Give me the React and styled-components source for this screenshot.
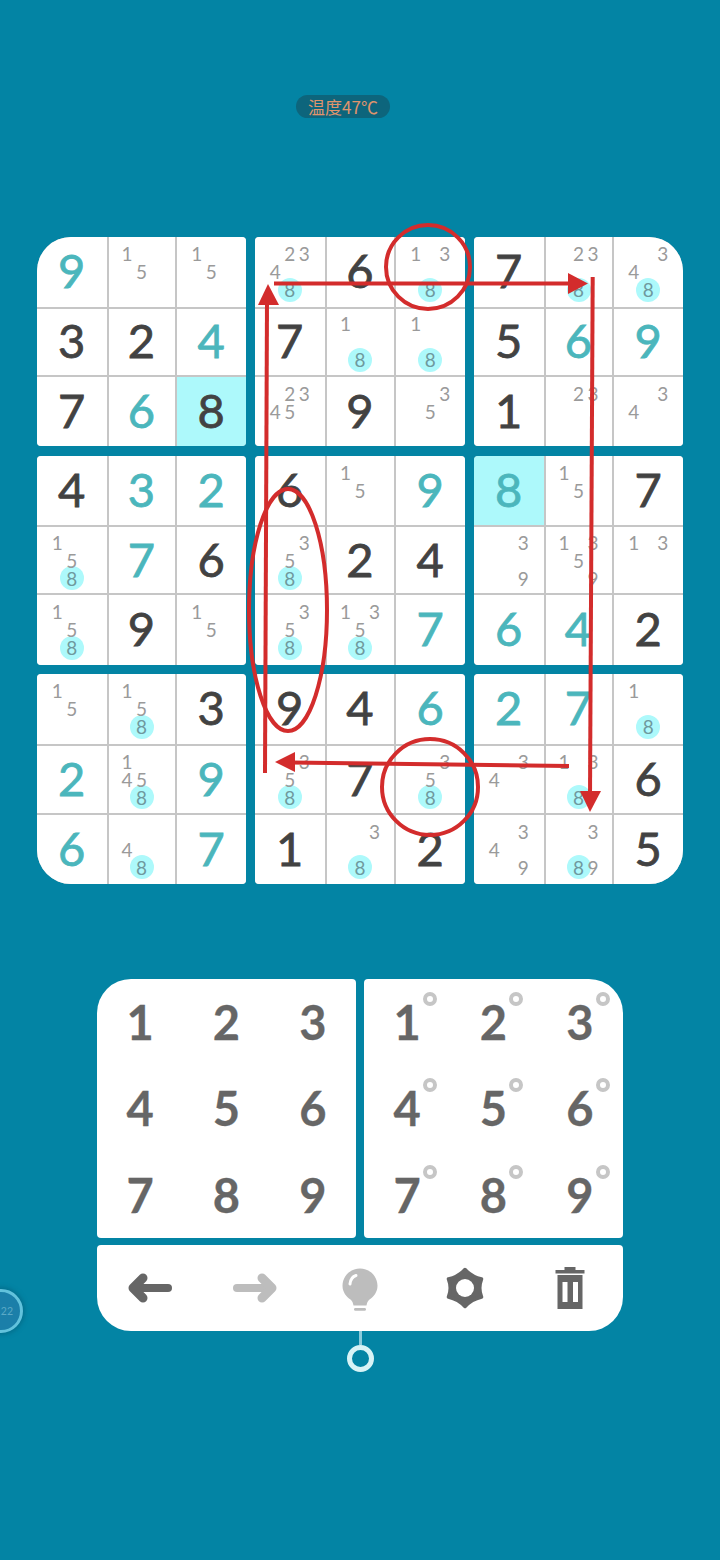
import React from 'react';
import styled, { createGlobalStyle } from 'styled-components';

const GlobalStyle = createGlobalStyle`
  html, body { margin: 0; padding: 0; background: #0384a4; overflow: hidden; }
`;

const Page = styled.div`
  position: relative;
  width: 720px;
  height: 1560px;
  background: #0384a4;
  display: flex;
  flex-direction: column;
  align-items: center;
  padding-top: 95px;
  box-sizing: border-box;
  overflow: hidden;
  font-family: "Lato", "Liberation Sans", sans-serif;
`;

const TempPill = styled.div`
  width: 94px;
  height: 23px;
  margin-right: 34px;
  border-radius: 12px;
  background: #0d657c;
  color: #e0946c;
  font: 400 17px/23px "Noto Sans CJK SC", sans-serif;
  text-align: center;
  white-space: nowrap;
`;

const Board = styled.div`
  margin-top: 119px;
  width: 646px;
  display: grid;
  grid-template-columns: 209px 210px 209px;
  grid-template-rows: 209px 209px 210px;
  column-gap: 9px;
  row-gap: 9.5px;
`;

const Box = styled.div`
  display: grid;
  grid-template-columns: 69.5px 1fr 69.5px;
  grid-template-rows: 69.5px 1fr 69.5px;
  gap: 2px;
  background: #c6c6c6;
  overflow: hidden;
  border-radius: ${(p) => p.$radius};
`;

const Cell = styled.div`
  display: flex;
  align-items: center;
  justify-content: center;
  padding-bottom: ${(p) => (p.$digit ? '2px' : '0')};
  background: ${(p) => (p.$hl ? '#adf9fb' : '#fff')};
  color: ${(p) => (p.$teal ? '#4bb6bc' : '#424242')};
  font-size: 47px;
  font-weight: 400;
  -webkit-text-stroke: ${(p) => (p.$digit ? '0.8px currentColor' : '0')};
  line-height: 1;
  isolation: isolate;
`;

const Notes = styled.div`
  display: grid;
  grid-template-columns: repeat(3, 14.5px);
  grid-template-rows: repeat(3, 18px);
`;

const Note = styled.span`
  position: relative;
  display: flex;
  align-items: center;
  justify-content: center;
  font-size: 19px;
  font-weight: 400;
  color: ${(p) => (p.$hot ? '#6f999e' : '#9a9a9a')};
  &::before {
    content: ${(p) => (p.$hot ? '""' : 'none')};
    position: absolute;
    left: 50%;
    top: 50%;
    width: 24px;
    height: 24px;
    margin: -12px 0 0 -12px;
    border-radius: 50%;
    background: #adf9fb;
    z-index: -1;
  }
`;

const Pads = styled.div`
  margin-top: 95px;
  display: flex;
  gap: 8px;
`;

const Pad = styled.div`
  width: 259px;
  height: 259px;
  background: #fff;
  border-radius: ${(p) => p.$radius};
  display: grid;
  grid-template-columns: repeat(3, 1fr);
  grid-template-rows: repeat(3, 1fr);
`;

const PadKey = styled.div`
  position: relative;
  display: flex;
  align-items: center;
  justify-content: center;
  padding-top: 1px;
  color: #666;
  font-size: 47px;
  font-weight: 700;
  -webkit-text-stroke: 0.3px currentColor;
  line-height: 1;
`;

const KeyRing = styled.i`
  position: absolute;
  left: 50%;
  top: 50%;
  width: 14px;
  height: 14px;
  margin: -30px 0 0 16px;
  box-sizing: border-box;
  border: 4px solid #c6c6c6;
  border-radius: 50%;
`;

const Toolbar = styled.div`
  margin-top: 7px;
  width: 526px;
  height: 86px;
  background: #fff;
  border-radius: 4px 4px 34px 34px;
  display: grid;
  grid-template-columns: repeat(5, 1fr);
  align-items: center;
  justify-items: center;
`;

const BulbSvg = styled.svg`
  margin-top: 4px;
`;

const Stem = styled.div`
  width: 3px;
  height: 14px;
  background: #8ccbdb;
`;

const PinRing = styled.div`
  width: 27px;
  height: 27px;
  box-sizing: border-box;
  border: 5px solid #d8f3f6;
  border-radius: 50%;
`;

const SideBubble = styled.div`
  position: absolute;
  left: -21px;
  top: 1289px;
  width: 44px;
  height: 44px;
  box-sizing: border-box;
  border: 3px solid #62c2dc;
  border-radius: 50%;
  background: #1b7fa9;
  box-shadow: 0 0 4px 2px #04708e;
  color: #5aa9c6;
  font-size: 10.5px;
  line-height: 38px;
  text-align: right;
  padding-right: 7px;
`;

const Overlay = styled.svg`
  position: absolute;
  left: 0;
  top: 0;
  pointer-events: none;
`;

const grid = [
  ['9t', [1, 5], [1, 5], [2, 3, 4, 8], '6', [1, 3, 8], '7', [2, 3, 8], [3, 4, 8]],
  ['3', '2', '4t', '7', [1, 8], [1, 8], '5', '6t', '9t'],
  ['7', '6t', '8h', [2, 3, 4, 5], '9', [3, 5], '1', [2, 3], [3, 4]],
  ['4', '3t', '2t', '6', [1, 5], '9t', '8th', [1, 5], '7'],
  [[1, 5, 8], '7t', '6', [3, 5, 8], '2', '4', [3, 9], [1, 3, 5, 9], [1, 3]],
  [[1, 5, 8], '9', [1, 5], [3, 5, 8], [1, 3, 5, 8], '7t', '6t', '4t', '2'],
  [[1, 5], [1, 5, 8], '3', '9', '4', '6t', '2t', '7t', [1, 8]],
  ['2t', [1, 4, 5, 8], '9t', [3, 5, 8], '7', [3, 5, 8], [3, 4], [1, 3, 8], '6'],
  ['6t', [4, 8], '7t', '1', [3, 8], '2', [3, 4, 9], [3, 8, 9], '5'],
];

const boxRadius = {
  0: '34px 4px 4px 4px',
  2: '4px 34px 4px 4px',
  6: '4px 4px 4px 34px',
  8: '4px 4px 34px 4px',
};

const digits = [1, 2, 3, 4, 5, 6, 7, 8, 9];

function SudokuCell({ value }) {
  if (Array.isArray(value)) {
    return (
      <Cell>
        <Notes>
          {digits.map((d) => (
            <Note key={d} $hot={d === 8 && value.includes(8)}>
              {value.includes(d) ? d : ''}
            </Note>
          ))}
        </Notes>
      </Cell>
    );
  }
  return (
    <Cell $digit $teal={value.includes('t')} $hl={value.includes('h')}>
      {value[0]}
    </Cell>
  );
}

function BackIcon({ color }) {
  return (
    <svg width="46" height="32" viewBox="0 0 46 32" fill="none" stroke={color} strokeWidth="8" strokeLinecap="round" strokeLinejoin="round">
      <path d="M41 16H8" />
      <path d="M16 6L6 16L16 26" strokeWidth="9" />
    </svg>
  );
}

function ForwardIcon({ color }) {
  return (
    <svg width="46" height="32" viewBox="0 0 46 32" fill="none" stroke={color} strokeWidth="8" strokeLinecap="round" strokeLinejoin="round">
      <path d="M5 16H38" />
      <path d="M30 6L40 16L30 26" strokeWidth="9" />
    </svg>
  );
}

function BulbIcon() {
  return (
    <BulbSvg width="36" height="44" viewBox="0 0 36 44">
      <path d="M18 0.5C8.3 0.5 0.5 8.2 0.5 17.8C0.5 24.5 4.6 28.9 8.5 31.5C10.3 33 11 34.8 11.5 37.5H24.5C25 34.8 25.7 33 27.5 31.5C31.4 28.9 35.5 24.5 35.5 17.8C35.5 8.2 27.7 0.5 18 0.5Z" fill="#bdbdbd" />
      <path d="M8 16C8.5 11.5 10.5 8.5 14 7.5" fill="none" stroke="#fff" strokeWidth="3" strokeLinecap="round" />
      <rect x="12" y="40" width="12" height="2.8" rx="1.4" fill="#bdbdbd" />
    </BulbSvg>
  );
}

function GearIcon() {
  return (
    <svg width="40" height="42" viewBox="0 0 40 42">
      <path
        d="M20 2.5Q26.5 9.7 36.5 12Q33 21 36.5 30Q26.5 32.3 20 39.5Q13.5 32.3 3.5 30Q7 21 3.5 12Q13.5 9.7 20 2.5Z"
        fill="#666"
        stroke="#666"
        strokeWidth="3.5"
        strokeLinejoin="round"
      />
      <circle cx="20" cy="21" r="9" fill="#fff" />
    </svg>
  );
}

function TrashIcon() {
  return (
    <svg width="30" height="42" viewBox="0 0 30 42">
      <rect x="9.5" y="0" width="11" height="4" fill="#666" />
      <rect x="0.5" y="3" width="29" height="3.5" fill="#666" />
      <path d="M2.5 8H27.5V42H2.5ZM7.5 15V35H12.5V15ZM18 15V35H23V15Z" fill="#666" fillRule="evenodd" />
    </svg>
  );
}

function Annotations() {
  const red = '#d32c2c';
  return (
    <Overlay width="720" height="1560" viewBox="0 0 720 1560" fill="none" stroke={red} strokeWidth="4">
      <path d="M274 283.5H572" />
      <path d="M588 283.5L568 273V294Z" fill={red} stroke="none" />
      <path d="M267 300L265 773" />
      <path d="M268 284L258 305H279Z" fill={red} stroke="none" />
      <path d="M592.7 277L590 795" />
      <path d="M590 812L580 791H601Z" fill={red} stroke="none" />
      <path d="M569 766L290 762.5" />
      <path d="M275 762L295 752V772Z" fill={red} stroke="none" />
      <circle cx="428" cy="267" r="42" />
      <circle cx="430" cy="787" r="48" />
      <ellipse cx="288" cy="610" rx="39" ry="121" />
    </Overlay>
  );
}

export default function App() {
  const boxes = [0, 1, 2, 3, 4, 5, 6, 7, 8].map((b) => {
    const r0 = Math.floor(b / 3) * 3;
    const c0 = (b % 3) * 3;
    return [0, 1, 2].flatMap((r) => [0, 1, 2].map((c) => grid[r0 + r][c0 + c]));
  });

  return (
    <Page>
      <GlobalStyle />
      <TempPill>温度47℃</TempPill>
      <Board>
        {boxes.map((cells, b) => (
          <Box key={b} $radius={boxRadius[b] || '4px'}>
            {cells.map((value, i) => (
              <SudokuCell key={i} value={value} />
            ))}
          </Box>
        ))}
      </Board>
      <Pads>
        <Pad $radius="34px 4px 4px 4px">
          {digits.map((d) => (
            <PadKey key={d}>{d}</PadKey>
          ))}
        </Pad>
        <Pad $radius="4px 34px 4px 4px">
          {digits.map((d) => (
            <PadKey key={d}>
              {d}
              <KeyRing />
            </PadKey>
          ))}
        </Pad>
      </Pads>
      <Toolbar>
        <BackIcon color="#666" />
        <ForwardIcon color="#bdbdbd" />
        <BulbIcon />
        <GearIcon />
        <TrashIcon />
      </Toolbar>
      <Stem />
      <PinRing />
      <SideBubble>22</SideBubble>
      <Annotations />
    </Page>
  );
}
